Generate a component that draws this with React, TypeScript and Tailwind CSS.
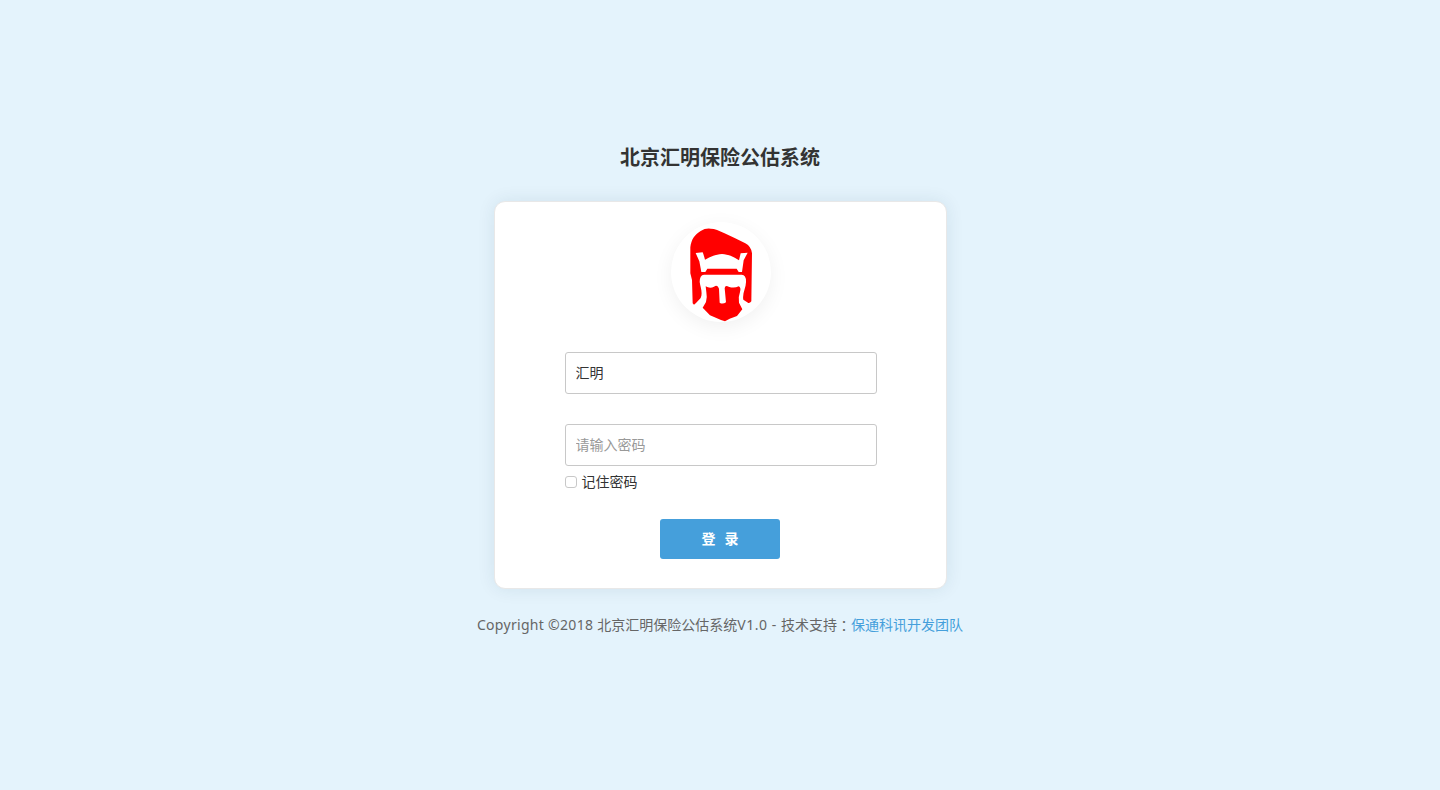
import { useState } from "react";

function HelmetLogo() {
  return (
    <svg viewBox="33 36 300 300" className="size-[100px]" aria-hidden="true">
      <path
        fill="#ff0000"
        d="M91 112C94 88 104 74 122 63Q136 54 152 56C164 56 178 62 192 69L224 84L256 100Q274 110 276 130L274 274Q270 280 265 279L250 269C246 250 259 233 258 214Q258 193 244 194H132Q119 195 119 216C121 232 129 247 122 264L108 279L102 284L98 280L96 210L91 190Z"
      />
      <path
        fill="#fff"
        d="M107 129L128 127Q132 137 135 149C152 139 168 133 186 132C204 133 220 139 237 151L242 130L263 128L251 151L246 186H236L230 176H142L136 186H124L118 154Z"
      />
      <path
        fill="#ff0000"
        d="M137 229Q150 237 162 230Q173 223 177 236L179 278Q188 284 198 277L194 235Q195 225 206 230Q222 236 236 229Q244 232 240 246Q234 261 237 278L247 298L231 318L209 326L195 334L183 330L150 316L128 293L138 276Q142 260 139 246Z"
      />
    </svg>
  );
}

export default function App() {
  const [name, setName] = useState("汇明");
  const [password, setPassword] = useState("");
  return (
    <main className="flex h-screen flex-col items-center bg-[#e4f3fc] pt-[142px] font-['Noto_Sans','Noto_Sans_CJK_SC',sans-serif] text-sm text-[#333]">
      <h1 className="font-['Noto_Sans_CJK_SC',sans-serif] text-xl leading-[30px] font-bold">北京汇明保险公估系统</h1>
      <form
        className="mt-[29px] ml-px flex h-[388px] w-[453px] flex-col items-center rounded-[11px] border border-[#e8e8e8] bg-white pt-5 shadow-[0_0_18px_rgba(0,50,80,0.09)]"
        onSubmit={(e) => e.preventDefault()}
      >
        <div className="size-[100px] shrink-0 overflow-visible rounded-full bg-white shadow-[0_5px_20px_rgba(0,0,0,0.06)]">
          <HelmetLogo />
        </div>
        <div className="mt-[30px] flex w-[312px] flex-col font-['Noto_Sans_CJK_SC',sans-serif]">
          <input
            className="h-[42px] rounded-[3px] border border-[#c8c8c8] bg-white px-2.5 pb-0.5 text-sm outline-none"
            value={name}
            onChange={(e) => setName(e.target.value)}
          />
          <input
            type="password"
            className="mt-[30px] h-[42px] rounded-[3px] border border-[#c8c8c8] bg-white px-2.5 pb-0.5 text-sm outline-none placeholder:text-[#999]"
            placeholder="请输入密码"
            value={password}
            onChange={(e) => setPassword(e.target.value)}
          />
          <label className="mt-1.5 flex h-5 items-center gap-[5px] leading-5">
            <input type="checkbox" className="size-3 appearance-none rounded-[3px] border border-[#c8c8c8] bg-white checked:bg-[#459fdb]" />
            <span className="pb-0.5">记住密码</span>
          </label>
        </div>
        <button className="mt-[27px] mr-px h-10 w-[120px] rounded-[3px] bg-[#459fdb] pb-0.5 font-['Noto_Sans_CJK_SC',sans-serif] text-sm font-bold text-white">
          登<span className="inline-block w-[9px]" />录
        </button>
      </form>
      <footer className="mt-[25px] flex items-baseline leading-5 whitespace-pre text-[#666]">
        <span className="tracking-[0.3px]">Copyright ©2018 </span>
        <span>北京汇明保险公估系统</span>
        <span className="tracking-[0.55px]">V1.0 - </span>
        <span>技术支持</span>
        <span className="translate-y-px font-['Noto_Sans_CJK_TC',sans-serif]" lang="zh-TW">：</span>
        <a href="#" className="text-[#459fdb]">保通科讯开发团队</a>
      </footer>
    </main>
  );
}
